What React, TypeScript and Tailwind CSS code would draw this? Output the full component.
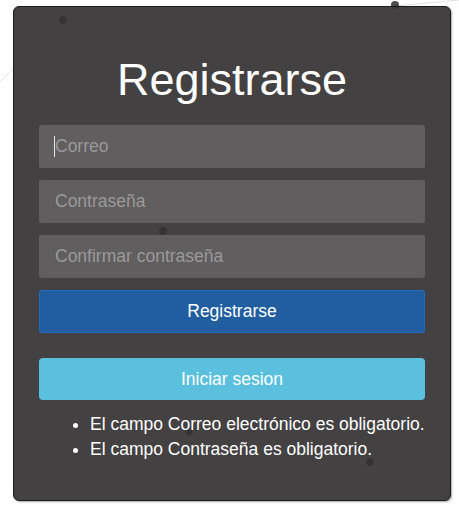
import { FC } from 'react'

const Particles: FC = () => (
	<svg className="absolute inset-0 h-full w-full" viewBox="0 0 459 507" preserveAspectRatio="none">
		<g stroke="#000" strokeOpacity="0.12" strokeWidth="1">
			<line x1="63" y1="20" x2="0" y2="82" />
			<line x1="395" y1="6" x2="459" y2="0" />
			<line x1="370" y1="462" x2="369" y2="420" />
			<line x1="370" y1="462" x2="397" y2="431" />
		</g>
		<g fill="#222" fillOpacity="0.8">
			<circle cx="63" cy="20" r="4" />
			<circle cx="395" cy="5" r="4" />
			<circle cx="163" cy="231" r="4" />
			<circle cx="189" cy="432" r="3.5" />
			<circle cx="370" cy="462" r="4" />
		</g>
	</svg>
)

const Field: FC<{ placeholder: string; type?: string; caret?: boolean }> = ({ placeholder, type = 'text', caret }) => (
	<div className="relative">
		<input
			type={type}
			placeholder={placeholder}
			className="block h-[43px] w-full rounded-[2px] bg-[#605e5f] px-4 text-[17.5px] text-white outline-none placeholder:text-[#9b999a]"
		/>
		{caret && <span className="absolute left-[15px] top-[11px] h-[21px] w-px bg-[#e6e6e6]" />}
	</div>
)

export default function App() {
	return (
		<div className="relative min-h-[507px] w-full bg-white font-['Liberation_Sans',Arial,sans-serif]">
			<Particles />

			<div className="relative pl-[13px] pr-[8px] pt-[6px]">
				<div className="rounded-[6px] border border-[#1c1b1b] bg-[rgba(52,49,50,0.92)] px-[25px] pb-[38px] pt-[48px] shadow-[1px_1px_2px_rgba(0,0,0,0.35)]">
					<h1 className="text-center text-[45px] leading-[50px] text-white">Registrarse</h1>

					<div className="mt-[20px] grid gap-y-[12px]">
						<Field placeholder="Correo" caret />
						<Field placeholder="Contraseña" type="password" />
						<Field placeholder="Confirmar contraseña" type="password" />

						<button className="h-[43px] w-full rounded-[3px] border border-[#1d6cc2] bg-[#205e9f] text-[17.5px] text-white">
							Registrarse
						</button>
					</div>

					<button className="mt-[25px] h-[42px] w-full rounded-[4px] bg-[#5bc0de] text-[17.5px] text-white">
						Iniciar sesion
					</button>

					<ul className="mt-[12px] list-disc pl-[51px] text-[17.5px] leading-[25px] text-white">
						<li>El campo Correo electrónico es obligatorio.</li>
						<li>El campo Contraseña es obligatorio.</li>
					</ul>
				</div>
			</div>
		</div>
	)
}
